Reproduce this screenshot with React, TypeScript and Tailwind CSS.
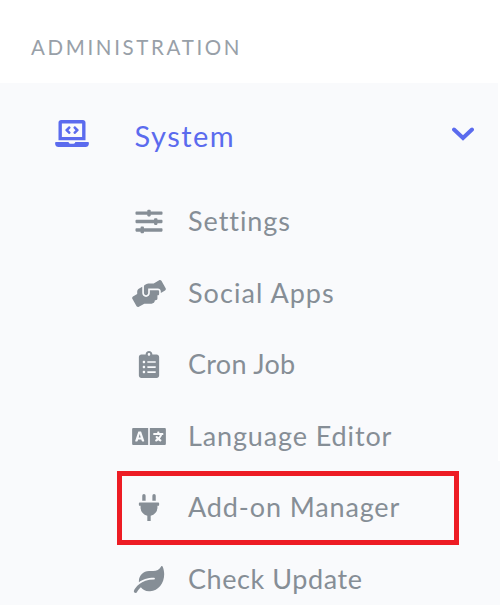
import type { IconType } from "react-icons";
import {
  FaClipboardList,
  FaHandsHelping,
  FaLanguage,
  FaLaptopCode,
  FaLeaf,
  FaPlug,
  FaSlidersH,
} from "react-icons/fa";

type Item = { label: string; icon: IconType; tracking: string; highlighted?: boolean };

const items: Item[] = [
  { label: "Settings", icon: FaSlidersH, tracking: "tracking-[0.95px]" },
  { label: "Social Apps", icon: FaHandsHelping, tracking: "tracking-[1.05px]" },
  { label: "Cron Job", icon: FaClipboardList, tracking: "tracking-[0.3px]" },
  { label: "Language Editor", icon: FaLanguage, tracking: "tracking-[0.87px]" },
  { label: "Add-on Manager", icon: FaPlug, tracking: "tracking-[0.87px]", highlighted: true },
  { label: "Check Update", icon: FaLeaf, tracking: "tracking-[0.57px]" },
];

function MenuItem({ label, icon: Icon, tracking, highlighted }: Item) {
  return (
    <li className="relative flex h-[71.5px] items-center text-[#868e96]">
      {highlighted && (
        <span className="absolute top-[-1px] left-[117px] h-[74px] w-[342px] border-[5px] border-[#ed1c24]" />
      )}
      <Icon className="ml-[132px] h-[27px] w-[34px] shrink-0" />
      <span className={`ml-[22px] pb-[2px] text-[27px] leading-none whitespace-nowrap ${tracking}`}>{label}</span>
    </li>
  );
}

export default function App() {
  return (
    <nav className="h-[605px] w-[500px] overflow-hidden bg-white font-[Lato,sans-serif]">
      <h2 className="flex h-[83px] items-center pt-3 pl-[31px] text-[20.5px] leading-none tracking-[2.65px] text-[#98a0a8]">
        ADMINISTRATION
      </h2>
      <section className="relative h-[522px] bg-[#f9fafc]">
        <span className="absolute top-0 right-0 h-[378px] w-[2px] bg-white" />
        <div className="flex h-[103px] items-center text-[#5b6bee]">
          <FaLaptopCode className="mb-[2px] ml-[54.5px] h-[27px] w-[34px]" />
          <span className="ml-[46px] pt-px text-[29px] leading-none tracking-[1.5px]">System</span>
          <svg className="mr-[26px] mb-[2px] ml-auto h-[14px] w-[22px]" viewBox="0 0 22 14" fill="none" stroke="currentColor" strokeWidth="4">
            <path d="M2 2.5 11 11l9-8.5" strokeLinecap="round" />
          </svg>
        </div>
        <ul>
          {items.map((item) => (
            <MenuItem key={item.label} {...item} />
          ))}
        </ul>
      </section>
    </nav>
  );
}
